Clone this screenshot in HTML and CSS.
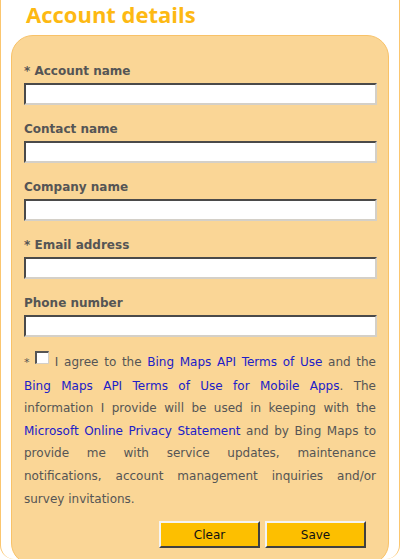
FILE: index.html
```html
<!DOCTYPE html>
<html>
<head>
<meta charset="utf-8">
<link rel="stylesheet" href="styles.css">
</head>
<body>
<div class="page">
  <h1 class="title">Account details</h1>
  <div class="panel">
    <div class="field">
      <label class="label">* Account name</label>
      <input class="input" type="text">
    </div>
    <div class="field">
      <label class="label">Contact name</label>
      <input class="input" type="text">
    </div>
    <div class="field">
      <label class="label">Company name</label>
      <input class="input" type="text">
    </div>
    <div class="field">
      <label class="label">* Email address</label>
      <input class="input" type="text">
    </div>
    <div class="field">
      <label class="label">Phone number</label>
      <input class="input" type="text">
    </div>
    <p class="terms"><span class="star">*</span> <span class="check"></span> I agree to the <a class="link">Bing Maps API Terms of Use</a> and the <a class="link">Bing Maps API Terms of Use for Mobile Apps</a>. The information I provide will be used in keeping with the <a class="link">Microsoft Online Privacy Statement</a> and by Bing Maps to provide me with service updates, maintenance notifications, account management inquiries and/or survey invitations.</p>
    <div class="actions">
      <button class="btn">Clear</button>
      <button class="btn">Save</button>
    </div>
  </div>
</div>
</body>
</html>
```
FILE: styles.css
```css
html, body {
  margin: 0;
  padding: 0;
  background: #ffffff;
}
html {
  height: 559px;
  overflow: hidden;
}
body {
  font-family: "DejaVu Sans", Verdana, sans-serif;
  width: 401px;
  height: 559px;
  overflow: hidden;
}
.page {
  width: 400px;
  height: 559px;
  box-sizing: border-box;
  display: flex;
  flex-direction: column;
  border-left: 1px solid #fbc66f;
  border-right: 1px solid #fbc66f;
  border-radius: 0 0 14px 14px;
  overflow: hidden;
}
.title {
  margin: 0;
  padding: 0 0 0 25px;
  height: 35px;
  flex: none;
  font-family: "Open Sans", "DejaVu Sans", sans-serif;
  font-size: 22px;
  line-height: 28px;
  font-weight: bold;
  color: #fdb913;
}
.panel {
  flex: 1;
  margin: 0 10px -6px 10px;
  background: #fad696;
  border: 1px solid #f8c268;
  border-radius: 22px;
  padding: 28px 12px 12px 12px;
}
.field {
  display: flex;
  flex-direction: column;
  margin-bottom: 17px;
}
.label {
  font-size: 12px;
  font-weight: bold;
  color: #555555;
  line-height: 15px;
  margin-bottom: 4px;
}
.input {
  box-sizing: border-box;
  height: 22px;
  width: 353px;
  margin: 0;
  padding: 0;
  background: #fff;
  border-style: solid;
  border-width: 2px;
  border-color: #4a4a4a #d4d0c8 #d4d0c8 #4a4a4a;
}
.terms {
  margin: -3px 0 0 0;
  font-size: 12px;
  line-height: 22.6px;
  color: #555555;
  text-align: justify;
}
.star {
  font-size: 11px;
}
.check {
  display: inline-block;
  width: 14px;
  height: 13px;
  box-sizing: border-box;
  background: #fff;
  border-style: solid;
  border-width: 2px 1px 1px 2px;
  border-color: #555 #d4d0c8 #d4d0c8 #555;
  vertical-align: 2px;
}
.link {
  color: #2020c8;
  text-decoration: none;
}
.actions {
  display: flex;
  justify-content: flex-end;
  gap: 5px;
  margin-top: 11px;
  padding-right: 10px;
}
.btn {
  width: 101px;
  height: 27px;
  box-sizing: border-box;
  background: #fdbf00;
  font-family: "DejaVu Sans", Verdana, sans-serif;
  font-size: 12px;
  color: #111;
  border-style: solid;
  border-width: 2px;
  border-color: #f4f4f4 #404040 #404040 #f4f4f4;
  padding: 0;
}
```
